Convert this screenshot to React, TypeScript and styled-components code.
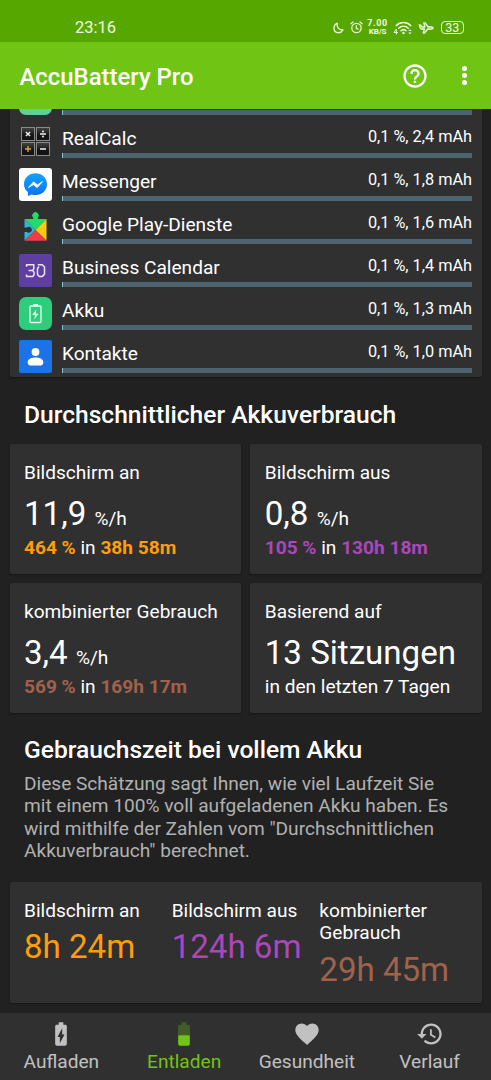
import React from "react";
import styled, { createGlobalStyle } from "styled-components";

const GlobalStyle = createGlobalStyle`
  * { box-sizing: border-box; }
  body { margin: 0; background: #212121; font-family: Roboto, sans-serif; color: #fff; }
  svg { display: block; flex: none; }
`;

const ORANGE = "#ff9d0b";
const PURPLE = "#ab47bc";
const BROWN = "#a1624c";

const Screen = styled.div`
  width: 491px;
  height: 1080px;
  display: flex;
  flex-direction: column;
  overflow: hidden;
  background: #212121;
`;

const StatusBar = styled.header`
  height: 42px;
  flex: none;
  display: flex;
  align-items: center;
  padding: 13px 27.5px 0 75px;
  background: #56a800;
  color: #f0f9e4;
`;

const Clock = styled.span`
  flex: 1;
  font-size: 16.5px;
  line-height: 20px;
`;

const StatusIcons = styled.div`
  display: flex;
  align-items: center;
`;

const StatusSlot = styled.span<{ $gap: number }>`
  margin-left: ${(p) => p.$gap}px;
`;

const NetSpeed = styled.div`
  display: flex;
  flex-direction: column;
  align-items: center;
  width: 20px;
  margin-left: 5px;
  font-weight: 700;
  font-size: 9px;
  letter-spacing: 0.6px;
  line-height: 8.5px;
  white-space: nowrap;
  span:last-child { font-size: 8px; letter-spacing: -0.2px; }
`;

const AppBar = styled.div`
  height: 67px;
  flex: none;
  display: flex;
  align-items: center;
  padding: 0 24px 0 19.5px;
  background: #70c413;
`;

const AppTitle = styled.h1`
  flex: 1;
  margin: 2px 0 0;
  font-size: 23.9px;
  font-weight: 500;
`;

const Content = styled.main`
  flex: 1;
  min-height: 0;
  overflow: hidden;
  display: flex;
  flex-direction: column;
  padding: 0 9.5px;
`;

const Card = styled.section`
  background: #303030;
  border-radius: 2px;
  box-shadow: 0 1px 2px rgba(0, 0, 0, 0.35);
`;

const AppList = styled(Card)`
  flex: none;
  display: flex;
  flex-direction: column;
  gap: 10px;
  margin-top: -27px;
  padding: 0 9.5px 4px;
`;

const AppRow = styled.div`
  display: flex;
  height: 33px;
  gap: 10px;
`;

const RowBody = styled.div`
  flex: 1;
  display: flex;
  flex-direction: column;
  justify-content: space-between;
`;

const RowText = styled.div`
  display: flex;
  justify-content: space-between;
  align-items: flex-start;
`;

const AppName = styled.span`
  font-size: 19.1px;
  line-height: 22px;
  padding-top: 3px;
`;

const Usage = styled.span`
  font-size: 16.3px;
  line-height: 20px;
  padding-top: 2px;
`;

const Track = styled.div`
  height: 5px;
  background: linear-gradient(90deg, #86c5d8 1px, #4d6470 1.500px);
`;

const Tile = styled.div<{ $color: string; $radius: number }>`
  width: 33px;
  height: 33px;
  flex: none;
  display: flex;
  align-items: center;
  justify-content: center;
  background: ${(p) => p.$color};
  border-radius: ${(p) => p.$radius}px;
`;

const SectionTitle = styled.h2`
  margin: 0;
  padding-left: 14.5px;
  font-size: 24.6px;
  line-height: 28px;
  font-weight: 500;
  white-space: nowrap;
`;

const FirstTitle = styled(SectionTitle)`
  margin-top: 23.5px;
`;

const StatGrid = styled.div`
  display: grid;
  grid-template-columns: 1fr 1fr;
  gap: 9.5px;
  margin: 15.5px 0 23px;
`;

const StatCard = styled(Card)`
  height: 129.5px;
  padding: 18px 14.5px 0;
  display: flex;
  flex-direction: column;
`;

const Label = styled.div`
  font-size: 19.1px;
  line-height: 22.3px;
`;

const Big = styled.div<{ $color?: string }>`
  font-size: 33.1px;
  line-height: 39px;
  margin-top: 9.5px;
  white-space: nowrap;
  color: ${(p) => p.$color ?? "#fff"};
`;

const Runtime = styled(Big)`
  margin-top: 5px;
`;

const Unit = styled.span`
  font-size: 19.1px;
  line-height: 1;
`;

const Detail = styled.div`
  font-size: 19.1px;
  line-height: 22px;
  margin-top: 4.5px;
`;

const Strong = styled.b<{ $color: string }>`
  color: ${(p) => p.$color};
  font-weight: 700;
`;

const Description = styled.p`
  margin: 9px 14.5px 0;
  font-size: 19.1px;
  line-height: 22.5px;
  color: #b1b1b1;
  white-space: nowrap;
`;

const RuntimeCard = styled(Card)`
  display: grid;
  grid-template-columns: repeat(3, 1fr);
  height: 121px;
  margin-top: 19.5px;
  padding: 18px 14.5px 0;
`;

const Nav = styled.nav`
  height: 67px;
  flex: none;
  display: grid;
  grid-template-columns: repeat(4, 1fr);
  background: #303030;
`;

const NavItem = styled.div<{ $active?: boolean }>`
  display: flex;
  flex-direction: column;
  align-items: center;
  padding-top: 7px;
  gap: 3px;
  font-size: 19.1px;
  line-height: 22px;
  color: ${(p) => (p.$active ? "#70c413" : "#c1c1c1")};
`;

const CalcIcon = () => (
  <svg width="33" height="33" viewBox="0 0 33 33">
    <defs>
      <linearGradient id="key" x1="0" y1="0" x2="0" y2="1">
        <stop offset="0" stopColor="#454545" />
        <stop offset="0.6" stopColor="#141414" />
      </linearGradient>
    </defs>
    {[[2, 2.5], [17, 2.5], [2, 17.5], [17, 17.5]].map(([x, y]) => (
      <rect key={`${x}-${y}`} x={x + 0.5} y={y} width="13" height="13" fill="url(#key)" stroke="#8a8a8a" strokeWidth="1" />
    ))}
    <g stroke="#f2f2f2" strokeWidth="1.4" fill="none">
      <path d="M6.900 6.900l4.200 4.200M11.100 6.900l-4.200 4.200M21 9h6M21 24h6" />
      <path d="M6 24h6M9 21v6" stroke="#e0a91e" />
    </g>
    <circle cx="24" cy="6.400" r="1" fill="#f2f2f2" />
    <circle cx="24" cy="11.600" r="1" fill="#f2f2f2" />
  </svg>
);

const MessengerIcon = () => (
  <svg width="33" height="33" viewBox="0 0 33 33">
    <defs>
      <linearGradient id="msg" x1="0" y1="0" x2="0" y2="1">
        <stop offset="0" stopColor="#12a4fb" />
        <stop offset="1" stopColor="#0c70f4" />
      </linearGradient>
    </defs>
    <path d="M16.500 5.300C10 5.300 5 10 5 16.200c0 3.300 1.500 6 3.900 7.900v4l3.800-1.700c1.200.4 2.500.6 3.800.6 6.500 0 11.500-4.700 11.500-10.800S23 5.300 16.500 5.300z" fill="url(#msg)" />
    <path d="M9.400 19.500l5.200-5.600 3.800 3 5-3.200-5.200 5.800-3.900-2.900z" fill="#fff" stroke="#fff" strokeWidth="0.9" strokeLinejoin="round" />
  </svg>
);

const PlayServicesIcon = () => (
  <svg width="33" height="33" viewBox="0 0 33 33">
    <clipPath id="puzzle">
      <path d="M5.500 8h8.700v-1.300a3.200 3.200 0 1 1 4.600 0V8h8.700v21.700h-22v-8.700h2.500a2.900 2.900 0 1 0 0-4.400H5.500z" />
    </clipPath>
    <g clipPath="url(#puzzle)">
      <path d="M5 0h23v7.500L16.500 18.900 5 7.500z" fill="#1fdd6c" />
      <path d="M5 7.500l11.500 11.400L5 30z" fill="#2bb5d8" />
      <path d="M28 7.500L16.500 18.900 28 30z" fill="#fdc90f" />
      <path d="M5 30.200l11.500-11.300L28 30.200z" fill="#ef3b4a" />
    </g>
  </svg>
);

const CalendarIcon = () => (
  <svg width="33" height="33" viewBox="0 0 33 33" fill="none" stroke="#eee6f8" strokeWidth="1.500" strokeLinejoin="round">
    <path d="M7.500 12.700v-1.900h7.300v4l-1.200 1.600h-4M13.600 16.400l1.400 1.600v3l-1.300 1.400H7.500v-1.900" />
    <path d="M18.800 10.800h4.500l2.200 2.200v7.200l-2.200 2.200h-3l-1.800-2v-6l1.500-1.800" />
  </svg>
);

const BatteryIcon = () => (
  <svg width="33" height="33" viewBox="0 0 33 33">
    <rect x="11" y="9" width="11" height="16.500" rx="1" fill="none" stroke="#e8fff2" strokeWidth="1.300" />
    <rect x="14" y="7" width="5" height="2.200" fill="#e8fff2" />
    <path d="M17.300 12.500l-4 5.600h2.600l-.6 4.400 4.100-5.700h-2.700z" fill="#e8fff2" />
  </svg>
);

const ContactIcon = () => (
  <svg width="33" height="33" viewBox="0 0 33 33" fill="#fff">
    <circle cx="16.500" cy="12" r="3.900" />
    <path d="M8.700 22.200c0-3.300 4.200-4.600 7.800-4.600s7.800 1.300 7.800 4.600c0 2.400-1.300 3.300-2.600 3.300H11.300c-1.300 0-2.600-.9-2.600-3.300z" />
  </svg>
);

const MoonIcon = () => (
  <svg width="11" height="12" viewBox="0 0 11 12" fill="none" stroke="currentColor" strokeWidth="1.300" strokeLinejoin="round">
    <path d="M4.200 1.200C3.500 5 6 8.200 10 8 7.500 12.300 1 11.300 1 6.200 1 3.900 2.300 2 4.200 1.200z" />
  </svg>
);

const AlarmIcon = () => (
  <svg width="13" height="13" viewBox="0 0 13 13" fill="none" stroke="currentColor" strokeWidth="1.200" strokeLinecap="round">
    <circle cx="6.500" cy="7" r="4.700" />
    <path d="M6.300 4.600v2.700l1.800.9M.9 2.800L3 1M12.100 2.800L10 1" />
  </svg>
);

const WifiIcon = () => (
  <svg width="20" height="14" viewBox="0 0 20 14" fill="none" stroke="currentColor" strokeLinecap="round">
    <path d="M3.200 4.600c4.200-4 10.400-4 14.600 0M5.700 7.300c2.800-2.600 6.800-2.600 9.600 0M8 9.700c1.500-1.300 3.500-1.300 5 0" strokeWidth="1.500" />
    <circle cx="10.500" cy="12" r="1.200" fill="currentColor" stroke="none" />
    <path d="M3.400 13V8L1 11.500h3.500" strokeWidth="1" />
    <path d="M15.300 10L17 8.200l1.700 1.800zM15.300 11.400l1.700 1.800 1.700-1.800z" fill="currentColor" stroke="none" />
  </svg>
);

const PlaneIcon = () => (
  <svg width="16" height="14" viewBox="0 0 16 14" fill="none" stroke="currentColor" strokeWidth="1.300" strokeLinejoin="round">
    <path d="M1.200 3.900h1.200l1.500 2.100h3L5.800 2h1.400l3 4h3.300c2.200.2 2.200 1.900 0 2h-3.800l-3.100 4H5.200L6.500 8H3.200c-1-.4-1.600-1.900-2-4.100z" />
  </svg>
);

const BatteryPill = styled.span`
  display: block;
  width: 22.5px;
  height: 13px;
  border: 1.500px solid currentColor;
  border-radius: 4px;
  font-size: 12.5px;
  line-height: 12px;
  text-align: center;
`;

const HelpIcon = () => (
  <svg width="28" height="28" viewBox="0 0 24 24" fill="#fff">
    <path d="M11 18h2v-2h-2v2zm1-16C6.480 2 2 6.480 2 12s4.480 10 10 10 10-4.480 10-10S17.520 2 12 2zm0 18c-4.410 0-8-3.590-8-8s3.590-8 8-8 8 3.590 8 8-3.590 8-8 8zm0-14c-2.210 0-4 1.790-4 4h2c0-1.100.9-2 2-2s2 .9 2 2c0 2-3 1.750-3 5h2c0-2.250 3-2.500 3-5 0-2.210-1.790-4-4-4z" />
  </svg>
);

const MoreIcon = styled.div`
  display: flex;
  flex-direction: column;
  gap: 2.2px;
  margin-left: 33.5px;
  i { width: 5px; height: 5px; border-radius: 50%; background: #fff; }
`;

const NavSvg = ({ children }: { children: React.ReactNode }) => (
  <svg width="28" height="28" viewBox="0 0 24 24" fill="currentColor">{children}</svg>
);

const apps = [
  { name: "RealCalc", usage: "0,1 %, 2,4 mAh", color: "transparent", radius: 0, icon: <CalcIcon /> },
  { name: "Messenger", usage: "0,1 %, 1,8 mAh", color: "#fff", radius: 3, icon: <MessengerIcon /> },
  { name: "Google Play-Dienste", usage: "0,1 %, 1,6 mAh", color: "transparent", radius: 0, icon: <PlayServicesIcon /> },
  { name: "Business Calendar", usage: "0,1 %, 1,4 mAh", color: "#5e3ea1", radius: 2, icon: <CalendarIcon /> },
  { name: "Akku", usage: "0,1 %, 1,3 mAh", color: "#2dcd7c", radius: 7, icon: <BatteryIcon /> },
  { name: "Kontakte", usage: "0,1 %, 1,0 mAh", color: "#1c73e8", radius: 2, icon: <ContactIcon /> },
];

export default function App() {
  return (
    <Screen>
      <GlobalStyle />
      <StatusBar>
        <Clock>23:16</Clock>
        <StatusIcons>
          <MoonIcon />
          <StatusSlot $gap={6}><AlarmIcon /></StatusSlot>
          <NetSpeed><span>7.00</span><span>KB/S</span></NetSpeed>
          <StatusSlot $gap={5.5}><WifiIcon /></StatusSlot>
          <StatusSlot $gap={5}><PlaneIcon /></StatusSlot>
          <StatusSlot $gap={7}><BatteryPill>33</BatteryPill></StatusSlot>
        </StatusIcons>
      </StatusBar>
      <AppBar>
        <AppTitle>AccuBattery Pro</AppTitle>
        <HelpIcon />
        <MoreIcon><i /><i /><i /></MoreIcon>
      </AppBar>
      <Content>
        <AppList>
          <AppRow>
            <Tile $color="#5fcf9c" $radius={7} />
            <RowBody><span /><Track /></RowBody>
          </AppRow>
          {apps.map((a) => (
            <AppRow key={a.name}>
              <Tile $color={a.color} $radius={a.radius}>{a.icon}</Tile>
              <RowBody>
                <RowText><AppName>{a.name}</AppName><Usage>{a.usage}</Usage></RowText>
                <Track />
              </RowBody>
            </AppRow>
          ))}
        </AppList>
        <FirstTitle>Durchschnittlicher Akkuverbrauch</FirstTitle>
        <StatGrid>
          <StatCard>
            <Label>Bildschirm an</Label>
            <Big>11,9 <Unit>%/h</Unit></Big>
            <Detail><Strong $color={ORANGE}>464 %</Strong> in <Strong $color={ORANGE}>38h 58m</Strong></Detail>
          </StatCard>
          <StatCard>
            <Label>Bildschirm aus</Label>
            <Big>0,8 <Unit>%/h</Unit></Big>
            <Detail><Strong $color={PURPLE}>105 %</Strong> in <Strong $color={PURPLE}>130h 18m</Strong></Detail>
          </StatCard>
          <StatCard>
            <Label>kombinierter Gebrauch</Label>
            <Big>3,4 <Unit>%/h</Unit></Big>
            <Detail><Strong $color={BROWN}>569 %</Strong> in <Strong $color={BROWN}>169h 17m</Strong></Detail>
          </StatCard>
          <StatCard>
            <Label>Basierend auf</Label>
            <Big>13 Sitzungen</Big>
            <Detail>in den letzten 7 Tagen</Detail>
          </StatCard>
        </StatGrid>
        <SectionTitle>Gebrauchszeit bei vollem Akku</SectionTitle>
        <Description>
          Diese Schätzung sagt Ihnen, wie viel Laufzeit Sie<br />
          mit einem 100% voll aufgeladenen Akku haben. Es<br />
          wird mithilfe der Zahlen vom "Durchschnittlichen<br />
          Akkuverbrauch" berechnet.
        </Description>
        <RuntimeCard>
          <div><Label>Bildschirm an</Label><Runtime $color={ORANGE}>8h 24m</Runtime></div>
          <div><Label>Bildschirm aus</Label><Runtime $color={PURPLE}>124h 6m</Runtime></div>
          <div><Label>kombinierter Gebrauch</Label><Runtime $color={BROWN}>29h 45m</Runtime></div>
        </RuntimeCard>
      </Content>
      <Nav>
        <NavItem>
          <NavSvg><path d="M15.670 4H14V2h-4v2H8.330C7.600 4 7 4.600 7 5.330v15.330C7 21.400 7.600 22 8.330 22h7.330c.740 0 1.340-.6 1.340-1.330V5.330C17 4.600 16.400 4 15.670 4zM11 20v-5.500H9L13 7v5.500h2L11 20z" /></NavSvg>
          Aufladen
        </NavItem>
        <NavItem $active>
          <NavSvg>
            <path opacity=".3" d="M17 5.330C17 4.600 16.400 4 15.670 4H14V2h-4v2H8.330C7.600 4 7 4.600 7 5.330V13h10V5.330z" />
            <path d="M7 13v7.670C7 21.400 7.600 22 8.330 22h7.330c.740 0 1.340-.6 1.340-1.330V13H7z" />
          </NavSvg>
          Entladen
        </NavItem>
        <NavItem>
          <NavSvg><path d="M12 21.350l-1.450-1.320C5.400 15.360 2 12.280 2 8.500 2 5.420 4.420 3 7.500 3c1.740 0 3.410.810 4.500 2.090C13.090 3.810 14.760 3 16.500 3 19.580 3 22 5.420 22 8.500c0 3.780-3.400 6.860-8.550 11.540L12 21.350z" /></NavSvg>
          Gesundheit
        </NavItem>
        <NavItem>
          <NavSvg><path d="M13 3c-4.970 0-9 4.030-9 9H1l3.890 3.890.070.140L9 12H6c0-3.870 3.130-7 7-7s7 3.130 7 7-3.130 7-7 7c-1.930 0-3.680-.790-4.940-2.060l-1.420 1.420C8.270 19.990 10.510 21 13 21c4.970 0 9-4.030 9-9s-4.030-9-9-9zm-1 5v5l4.280 2.540.720-1.210-3.500-2.080V8H12z" /></NavSvg>
          Verlauf
        </NavItem>
      </Nav>
    </Screen>
  );
}
